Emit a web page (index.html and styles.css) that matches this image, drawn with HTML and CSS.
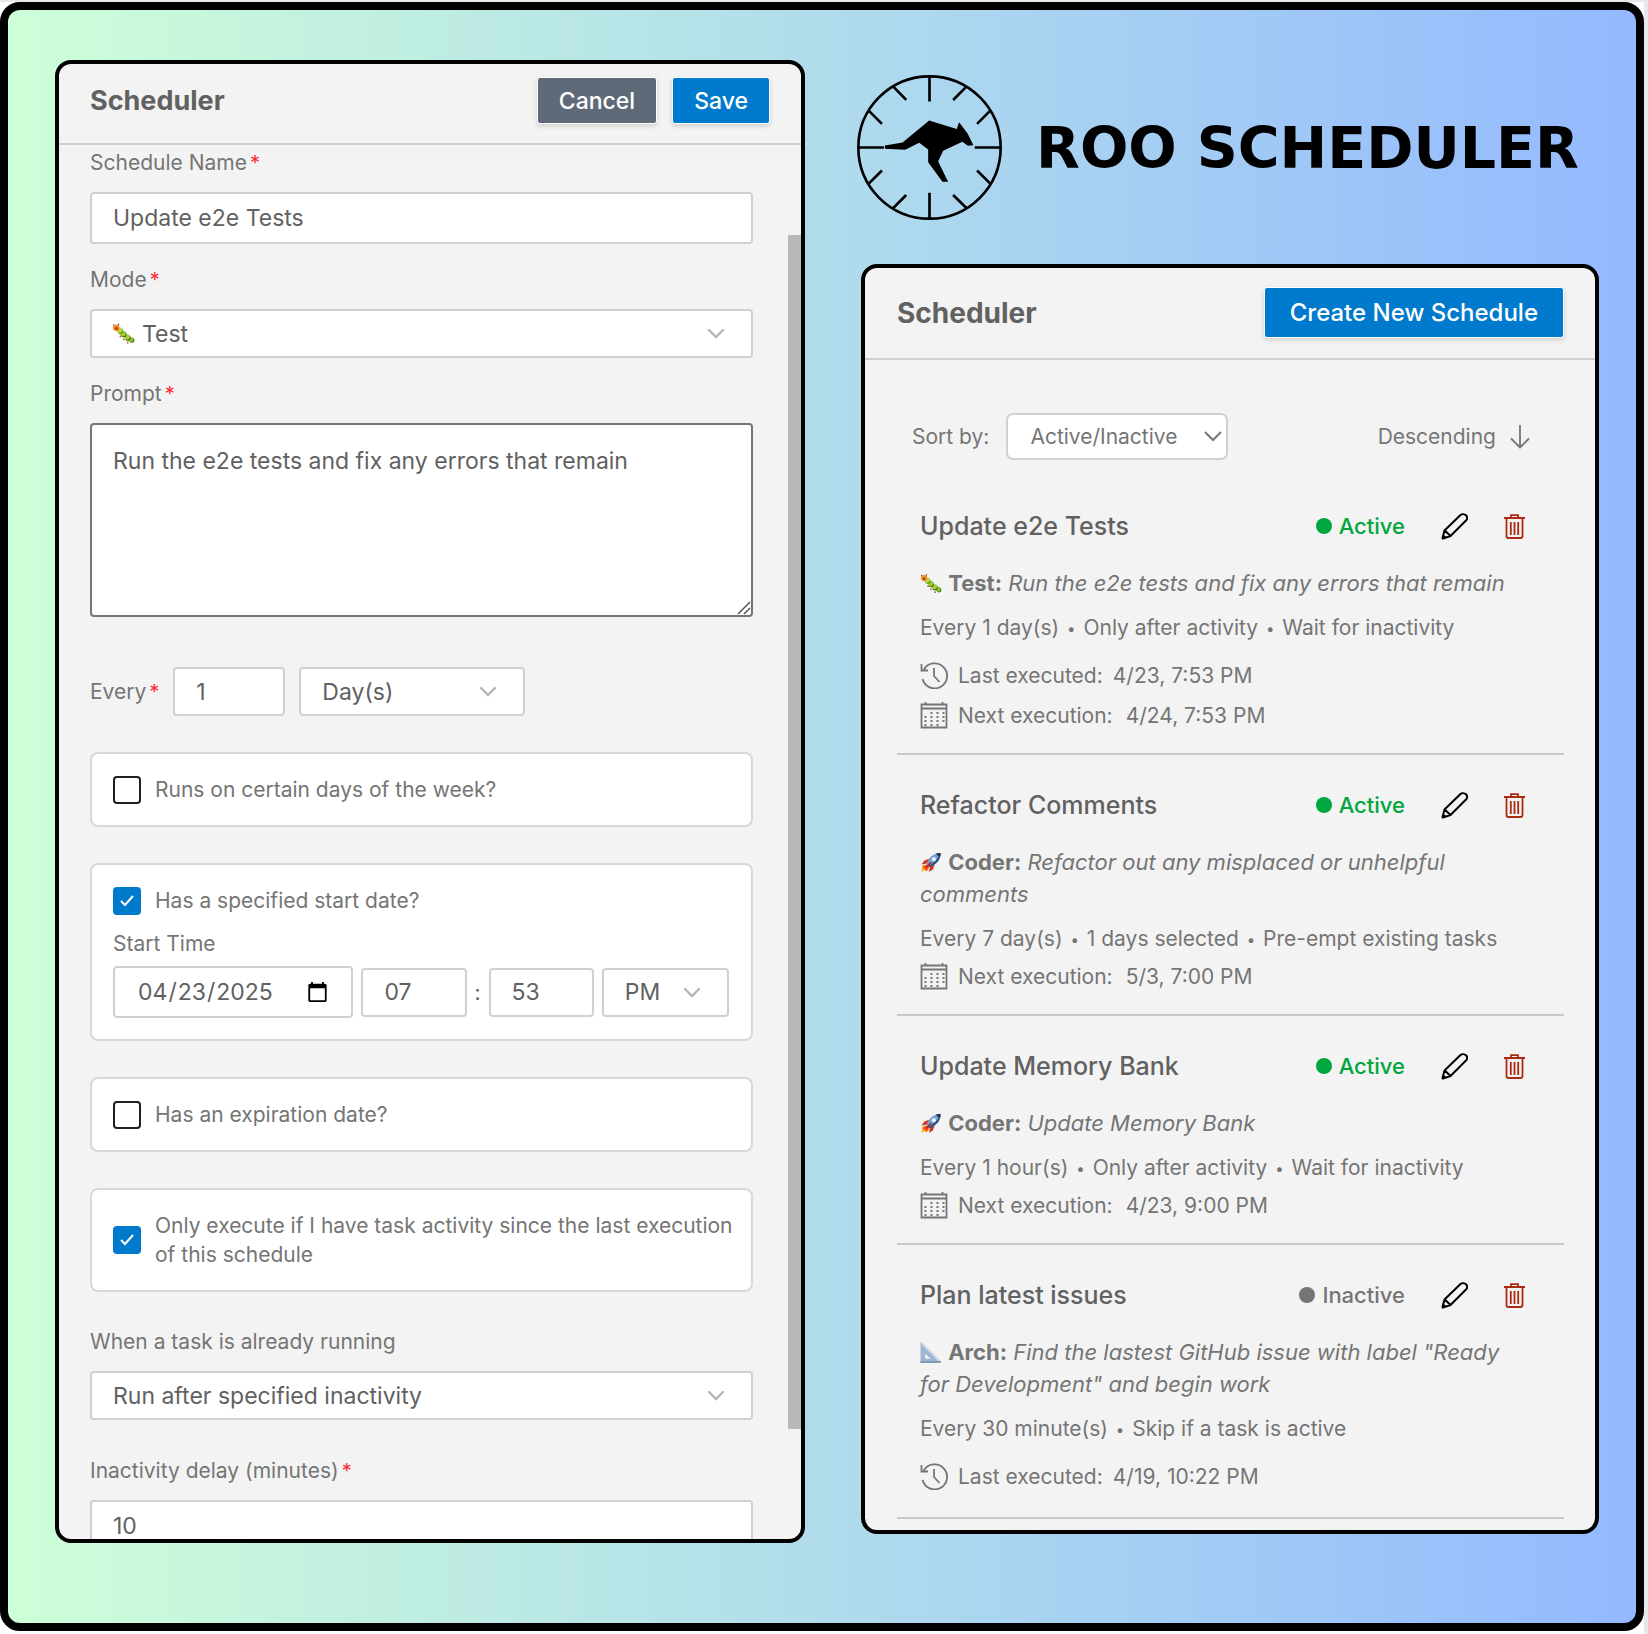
FILE: index.html
```html
<!DOCTYPE html>
<html lang="en">
<head>
    <meta charset="UTF-8">
    <meta name="viewport" content="width=device-width, initial-scale=1.0">
    <title>Roo Scheduler</title>
    <link rel="stylesheet" href="styles.css">
</head>
<body>
    <!-- Shared icons -->
    <svg class="sprite" aria-hidden="true">
        <symbol id="icon-bug" viewBox="0 0 22 20">
            <path d="M1 1.500 3 3M6.500 .5 6 3" stroke="#5a4a30" stroke-width="1" fill="none"/>
            <circle cx="19" cy="16.500" r="2.400" fill="#3f6a12"/>
            <circle cx="18" cy="15.800" r="2.500" fill="#8fc32e"/>
            <circle cx="15" cy="14.200" r="2.700" fill="#3d6413"/>
            <circle cx="14.300" cy="13.300" r="2.700" fill="#a3d238"/>
            <circle cx="11.200" cy="10.900" r="2.700" fill="#41680f"/>
            <circle cx="10.600" cy="10" r="2.700" fill="#9acb30"/>
            <circle cx="7.800" cy="7.600" r="2.700" fill="#4a7013"/>
            <circle cx="7.200" cy="6.800" r="2.700" fill="#b4d93c"/>
            <circle cx="4" cy="4.500" r="3.100" fill="#f0902c"/>
            <circle cx="4.200" cy="5.300" r="1.400" fill="#c23a1c"/>
            <path d="M8 12v1.500M11 15v1.500M15 18v1.500" stroke="#c0562a" stroke-width="1.500"/>
        </symbol>
        <symbol id="icon-rocket" viewBox="0 0 22 22">
            <path d="M1 21 2 14l4-1 3 3-2 4-3-1z" fill="#fdb913"/>
            <path d="M2 16 5 13l4 4-3 3z" fill="#f4572a"/>
            <path d="M9 7 4 9l-3 4 6-1z" fill="#d8321f"/>
            <path d="m15 13-2 5-4 3 1-6z" fill="#d8321f"/>
            <path d="M6 13C8 7 13 1 21 1c0 8-5 12-12 15z" fill="#6f9fd0"/>
            <path d="M8 15c6-4 11-8 13-14 0 8-5 12-12 15z" fill="#2d4f80"/>
            <path d="M16 1.800C18 1 19.500 1 21 1c0 2 0 3-.800 4.800z" fill="#24364f"/>
            <circle cx="14" cy="7.500" r="2.200" fill="#e8f2fb"/>
            <path d="m6 16 5-5" stroke="#b81f1f" stroke-width="1.800"/>
        </symbol>
        <symbol id="icon-triangle" viewBox="0 0 22 22">
            <path d="M0 0v22h22zM5 12l5.500 5.500H5z" fill="#9fb6d2" fill-rule="evenodd"/>
            <path d="M0 0 22 22" stroke="#c9d9ea" stroke-width="2"/>
            <path d="M0 21h21" stroke="#8298b8" stroke-width="2"/>
        </symbol>
        <symbol id="icon-history" viewBox="0 0 28 28">
            <path d="M3.800 8.500A12.500 12.500 0 1 1 2.500 18M1.500 3v6.500H8M14 7v8l5.500 6" fill="none" stroke="currentColor" stroke-width="1.800"/>
        </symbol>
        <symbol id="icon-calendar" viewBox="0 0 28 28">
            <path d="M1.500 3.500h25v23h-25zM1.500 7.500h25M5.500 1v3M22.500 1v3" fill="none" stroke="currentColor" stroke-width="1.800"/>
            <path d="M10.500 12h15M4.500 16h20M4.500 20h20M4.500 24h14" fill="none" stroke="currentColor" stroke-width="2" stroke-dasharray="2 4"/>
        </symbol>
        <symbol id="icon-pencil" viewBox="0 0 27 27">
            <path d="M3.500 17.500 19.500 2c1.500-1.300 4-1.100 5.500.300 1.400 1.500 1.400 3.700 0 5.200L9.500 23 2 25.500l-.500-.500zM3.800 17.500l5.700 5.500" fill="none" stroke="currentColor" stroke-width="2" stroke-linejoin="round"/>
            <path d="M2.400 21.500 5.500 24.500 1 26.500.800 26z" fill="currentColor"/>
        </symbol>
        <symbol id="icon-trash" viewBox="0 0 21 25">
            <path d="M0 4h21M7 4V1.200h7V4M2.500 4v18c0 1.200.8 2 2 2h12c1.200 0 2-.8 2-2V4M6.800 8v13M10.500 8v13M14.200 8v13" fill="none" stroke="currentColor" stroke-width="1.800"/>
        </symbol>
    </svg>

    <div class="page">
        <div class="frame">
            <section class="panel form-panel">
                <header class="panel-header">
                    <h2>Scheduler</h2>
                    <div class="header-actions">
                        <button class="btn btn-secondary" type="button">Cancel</button>
                        <button class="btn" type="button">Save</button>
                    </div>
                </header>
                <form class="form-body">
                    <div class="field">
                        <label for="name">Schedule Name<span class="required">*</span></label>
                        <input class="control tall" id="name" type="text" value="Update e2e Tests">
                    </div>
                    <div class="field">
                        <label for="mode">Mode<span class="required">*</span></label>
                        <div class="select-icon">
                            <svg><use href="#icon-bug"/></svg>
                            <select class="control" id="mode">
                                <option>Test</option>
                                <option>Coder</option>
                            </select>
                        </div>
                    </div>
                    <div class="field">
                        <label for="prompt">Prompt<span class="required">*</span></label>
                        <textarea class="control" id="prompt">Run the e2e tests and fix any errors that remain</textarea>
                    </div>

                    <div class="interval">
                        <label for="interval">Every<span class="required">*</span></label>
                        <input class="control" id="interval" type="text" value="1">
                        <select class="control" id="unit" aria-label="Unit">
                            <option>Day(s)</option>
                            <option>Hour(s)</option>
                            <option>Minute(s)</option>
                        </select>
                    </div>

                    <div class="card">
                        <label class="check"><input type="checkbox"> Runs on certain days of the week?</label>
                    </div>
                    <div class="card">
                        <label class="check"><input type="checkbox" checked> Has a specified start date?</label>
                        <label class="start-label" for="start-date">Start Time</label>
                        <div class="start-time">
                            <input class="control tall date" id="start-date" type="date" value="2025-04-23">
                            <input class="control" type="text" value="07" aria-label="Hour">
                            <span>:</span>
                            <input class="control" type="text" value="53" aria-label="Minute">
                            <select class="control" aria-label="AM or PM">
                                <option>PM</option>
                                <option>AM</option>
                            </select>
                        </div>
                    </div>
                    <div class="card">
                        <label class="check"><input type="checkbox"> Has an expiration date?</label>
                    </div>
                    <div class="card">
                        <label class="check"><input type="checkbox" checked> Only execute if I have task activity since the last execution of this schedule</label>
                    </div>

                    <div class="field">
                        <label for="running">When a task is already running</label>
                        <select class="control" id="running">
                            <option>Run after specified inactivity</option>
                        </select>
                    </div>
                    <div class="field">
                        <label for="delay">Inactivity delay (minutes)<span class="required">*</span></label>
                        <input class="control tall" id="delay" type="text" value="10">
                    </div>
                    <div class="scroll-thumb"></div>
                </form>
            </section>

            <div class="side">
                <div class="brand">
                    <svg class="logo" viewBox="0 0 436 436" aria-hidden="true">
                        <circle cx="218" cy="218" r="214" fill="none" stroke="#000" stroke-width="8"/>
                        <path d="M218 4v76M218 354v78M4 218h77M354 218h78M109 35l39 40M36 108l39 39M329 35l-40 40M400 108l-39 39M75 287l-39 39M148 361l-39 39M361 287l39 39M289 361l40 39" stroke="#000" stroke-width="8"/>
                        <path d="M84 212 137 203 217 137 300 162 307 142 333 177 350 211 333 213 317 201 259 228 244 260 274 321 257 321 214 262 214 224 187 204 145 225 84 222z"/>
                    </svg>
                    <h1>ROO SCHEDULER</h1>
                </div>

                <section class="panel list-panel">
                    <header class="panel-header">
                        <h2>Scheduler</h2>
                        <button class="btn" type="button">Create New Schedule</button>
                    </header>
                    <div class="list-body">
                        <div class="sort-bar">
                            <label for="sort">Sort by:</label>
                            <select id="sort">
                                <option>Active/Inactive</option>
                            </select>
                            <button class="sort-direction" type="button">
                                Descending
                                <svg viewBox="0 0 20 24"><path d="M10 0v22M1 13.500l9 9 9-9" fill="none" stroke="currentColor" stroke-width="1.800"/></svg>
                            </button>
                        </div>

                        <article class="schedule">
                            <div class="schedule-top">
                                <h3>Update e2e Tests</h3>
                                <span class="status active">Active</span>
                                <button class="icon-btn" type="button" aria-label="Edit"><svg class="pencil"><use href="#icon-pencil"/></svg></button>
                                <button class="icon-btn delete" type="button" aria-label="Delete"><svg class="trash"><use href="#icon-trash"/></svg></button>
                            </div>
                            <p class="prompt"><svg><use href="#icon-bug"/></svg> <b>Test:</b> <i>Run the e2e tests and fix any errors that remain</i></p>
                            <p class="rule">Every 1 day(s) <span>•</span> Only after activity <span>•</span> Wait for inactivity</p>
                            <div class="run last"><svg><use href="#icon-history"/></svg><span>Last executed:</span> <time>4/23, 7:53 PM</time></div>
                            <div class="run next"><svg><use href="#icon-calendar"/></svg><span>Next execution:</span> <time>4/24, 7:53 PM</time></div>
                        </article>

                        <article class="schedule">
                            <div class="schedule-top">
                                <h3>Refactor Comments</h3>
                                <span class="status active">Active</span>
                                <button class="icon-btn" type="button" aria-label="Edit"><svg class="pencil"><use href="#icon-pencil"/></svg></button>
                                <button class="icon-btn delete" type="button" aria-label="Delete"><svg class="trash"><use href="#icon-trash"/></svg></button>
                            </div>
                            <p class="prompt"><svg><use href="#icon-rocket"/></svg> <b>Coder:</b> <i>Refactor out any misplaced or unhelpful comments</i></p>
                            <p class="rule">Every 7 day(s) <span>•</span> 1 days selected <span>•</span> Pre-empt existing tasks</p>
                            <div class="run next"><svg><use href="#icon-calendar"/></svg><span>Next execution:</span> <time>5/3, 7:00 PM</time></div>
                        </article>

                        <article class="schedule">
                            <div class="schedule-top">
                                <h3>Update Memory Bank</h3>
                                <span class="status active">Active</span>
                                <button class="icon-btn" type="button" aria-label="Edit"><svg class="pencil"><use href="#icon-pencil"/></svg></button>
                                <button class="icon-btn delete" type="button" aria-label="Delete"><svg class="trash"><use href="#icon-trash"/></svg></button>
                            </div>
                            <p class="prompt"><svg><use href="#icon-rocket"/></svg> <b>Coder:</b> <i>Update Memory Bank</i></p>
                            <p class="rule">Every 1 hour(s) <span>•</span> Only after activity <span>•</span> Wait for inactivity</p>
                            <div class="run next"><svg><use href="#icon-calendar"/></svg><span>Next execution:</span> <time>4/23, 9:00 PM</time></div>
                        </article>

                        <article class="schedule">
                            <div class="schedule-top">
                                <h3>Plan latest issues</h3>
                                <span class="status">Inactive</span>
                                <button class="icon-btn" type="button" aria-label="Edit"><svg class="pencil"><use href="#icon-pencil"/></svg></button>
                                <button class="icon-btn delete" type="button" aria-label="Delete"><svg class="trash"><use href="#icon-trash"/></svg></button>
                            </div>
                            <p class="prompt"><svg><use href="#icon-triangle"/></svg> <b>Arch:</b> <i>Find the lastest GitHub issue with label "Ready for Development" and begin work</i></p>
                            <p class="rule">Every 30 minute(s) <span>•</span> Skip if a task is active</p>
                            <div class="run last"><svg><use href="#icon-history"/></svg><span>Last executed:</span> <time>4/19, 10:22 PM</time></div>
                        </article>
                    </div>
                </section>
            </div>
        </div>
    </div>
</body>
</html>
```
FILE: styles.css
```css
* {
    box-sizing: border-box;
}

body {
    margin: 0;
    height: 100vh;
    padding: 2px 4px 0 0;
    background-color: #e6e8ee;
    font-family: Inter, "Liberation Sans", sans-serif;
    font-size: 21px;
    color: #757575;
}

h1, h2, h3, p {
    margin: 0;
}

button, input, select, textarea {
    font-family: inherit;
}

.sprite {
    position: absolute;
    width: 0;
    height: 0;
}

.page {
    height: 100%;
    padding-bottom: 3px;
    background-color: #fff;
}

.frame {
    display: grid;
    grid-template-columns: 750fr 742fr;
    gap: 52px;
    height: 100%;
    padding: 50px 37px 80px 47px;
    border: 8px solid #000;
    border-radius: 20px;
    background: linear-gradient(90deg, #cdffd8, #94b9ff);
}

.panel {
    display: flex;
    flex-direction: column;
    min-height: 0;
    overflow: hidden;
    background-color: #f3f3f3;
    border: 4px solid #000;
    border-radius: 16px;
}

.panel-header {
    display: flex;
    align-items: center;
    justify-content: space-between;
    padding: 13px 31px 19px;
    border-bottom: 2px solid #d0d0d0;
}

.panel-header h2 {
    font-size: 27px;
    font-weight: 700;
    color: #616161;
}

.header-actions {
    display: flex;
    gap: 15px;
}

.btn {
    height: 47px;
    padding: 0 21px;
    font-size: 23px;
    font-weight: 500;
    color: #fff;
    background-color: #007acc;
    border: 1px solid #fff;
    border-radius: 3px;
    box-shadow: 0 2px 5px rgba(0,0,0,0.15);
    cursor: pointer;
}

.btn-secondary {
    background-color: #5f6a79;
}

/* Form */
.form-body {
    position: relative;
    flex: 1;
    min-height: 0;
    overflow: hidden;
    padding: 4px 48px 0 31px;
}

.field {
    display: flex;
    flex-direction: column;
    gap: 15px;
    margin-bottom: 22px;
    line-height: 28px;
}

.card ~ .field {
    margin-bottom: 37px;
}

.required {
    margin-left: 3px;
    font-size: 20px;
    color: #fb2c36;
}

.control {
    width: 100%;
    height: 49px;
    padding: 0 21px;
    font-size: 23px;
    color: #616161;
    background-color: #fff;
    border: 2px solid #d0d0d0;
    border-radius: 4px;
}

.tall {
    height: 52px;
}

select.control {
    appearance: none;
    background-image: url("data:image/svg+xml,%3Csvg xmlns='http://www.w3.org/2000/svg' width='18' height='11' fill='none' stroke='%23b5b5b5' stroke-width='2.400' stroke-linecap='round'%3E%3Cpath d='M2 2l7 7 7-7'/%3E%3C/svg%3E");
    background-repeat: no-repeat;
    background-position: right 26px center;
}

textarea.control {
    display: block;
    height: 194px;
    padding: 20px 21px;
    line-height: 32px;
    border-color: #757575;
}

textarea::-webkit-resizer {
    background: url("data:image/svg+xml,%3Csvg xmlns='http://www.w3.org/2000/svg' width='15' height='15' fill='none' stroke='%23555'%3E%3Cpath d='M2 14L14 2M8 14l6-6' stroke-width='1.500'/%3E%3C/svg%3E");
}

.select-icon {
    position: relative;
}

.select-icon svg {
    position: absolute;
    left: 22px;
    top: 14px;
    width: 23px;
    height: 21px;
}

.select-icon select {
    padding-left: 50px;
}

.interval {
    display: flex;
    align-items: center;
    gap: 14px;
    margin: 50px 0 36px;
}

.interval input {
    width: 112px;
}

.interval select {
    width: 226px;
}

.card {
    margin-bottom: 36px;
    padding: 21px 16px 21px 21px;
    background-color: #fff;
    border: 2px solid #d8d8d8;
    border-radius: 8px;
}

.check {
    display: flex;
    align-items: center;
    gap: 14px;
    line-height: 29px;
}

.check input {
    appearance: none;
    flex: none;
    width: 28px;
    height: 28px;
    margin: 0;
    background-color: #fff;
    border: 2px solid #1f1f1f;
    border-radius: 4px;
}

.check input:checked {
    background: #007acc url("data:image/svg+xml,%3Csvg xmlns='http://www.w3.org/2000/svg' width='16' height='14' fill='none' stroke='white' stroke-width='2'%3E%3Cpath d='M2 7l4 4 8-9'/%3E%3C/svg%3E") no-repeat center;
    border-color: #007acc;
}

.start-label {
    display: block;
    margin: 15px 0 8px;
    line-height: 28px;
}

.start-time {
    display: grid;
    grid-template-columns: 240fr 105fr auto 105fr 127fr;
    align-items: center;
    gap: 8px;
    margin-right: 6px;
}

.start-time .control {
    min-width: 0;
}

.start-time .date {
    padding: 0 20px 0 22px;
}

.start-time span {
    color: #616161;
}

.scroll-thumb {
    position: absolute;
    top: 90px;
    right: 0;
    bottom: 110px;
    width: 13px;
    background-color: #b9b9b9;
}

/* Brand */
.side {
    display: flex;
    flex-direction: column;
    min-width: 0;
    min-height: 0;
    margin: 15px 0 9px;
}

.brand {
    display: flex;
    align-items: center;
    gap: 34px;
}

.brand h1 {
    font-family: "DejaVu Sans", sans-serif;
    font-size: 57px;
    font-weight: 700;
    line-height: 64px;
    color: #000;
    white-space: nowrap;
}

.logo {
    flex: none;
    width: 145px;
    height: 145px;
}

/* Schedule list */
.list-panel {
    flex: 1;
    margin: 44px 0 0 4px;
}

.list-panel .panel-header {
    padding: 19px 31px 20px 32px;
}

.list-panel h2 {
    font-size: 28px;
}

.list-panel .btn {
    height: 51px;
    padding: 0 25px;
    font-size: 24px;
}

.list-body {
    padding: 53px 31px 0 32px;
}

.sort-bar {
    display: flex;
    align-items: center;
    padding: 0 34px 0 15px;
    margin-bottom: 16px;
}

.sort-bar select {
    appearance: none;
    width: 222px;
    height: 47px;
    margin-left: 17px;
    padding: 0 22px;
    font-size: 21px;
    color: #757575;
    background: #fff url("data:image/svg+xml,%3Csvg xmlns='http://www.w3.org/2000/svg' width='18' height='11' fill='none' stroke='%23757575' stroke-width='2'%3E%3Cpath d='M1 1l8 8 8-8'/%3E%3C/svg%3E") no-repeat right 4px center;
    border: 2px solid #d0d0d0;
    border-radius: 7px;
}

.sort-direction {
    display: flex;
    align-items: center;
    gap: 14px;
    margin-left: auto;
    padding: 0;
    font-size: 21px;
    color: #757575;
    background: none;
    border: none;
    cursor: pointer;
}

.sort-direction svg {
    width: 20px;
    height: 24px;
}

.schedule {
    padding: 34px 39px 24px 23px;
    border-bottom: 2px solid #c8c8c8;
}

.schedule-top {
    display: flex;
    align-items: center;
    gap: 36px;
    height: 32px;
    margin-bottom: 25px;
}

.schedule h3 {
    flex: 1;
    font-size: 25px;
    font-weight: 500;
    color: #616161;
}

.status {
    display: flex;
    align-items: center;
    gap: 7px;
    font-size: 22px;
    font-weight: 500;
}

.status::before {
    content: "";
    width: 16px;
    height: 16px;
    border-radius: 50%;
    background-color: currentColor;
}

.status.active {
    color: #00a63e;
}

.icon-btn {
    display: flex;
    padding: 0;
    color: #000;
    background: none;
    border: none;
    cursor: pointer;
}

.icon-btn.delete {
    color: #ab2a12;
}

.pencil {
    width: 27px;
    height: 27px;
}

.trash {
    width: 21px;
    height: 25px;
}

.prompt {
    font-size: 22px;
    line-height: 32px;
}

.prompt svg {
    width: 22px;
    height: 21px;
    vertical-align: -3px;
}

.rule {
    margin-top: 15px;
    line-height: 28px;
}

.rule span {
    margin: 0 2px;
    font-size: 15px;
    line-height: 1;
    vertical-align: 1px;
}

.run {
    display: flex;
    align-items: center;
    gap: 10px;
    height: 28px;
    margin-top: 9px;
}

.run svg {
    width: 28px;
    height: 28px;
}

.run.last {
    height: 34px;
    margin-top: 16px;
}

.run.next time {
    margin-left: 3px;
}
```
